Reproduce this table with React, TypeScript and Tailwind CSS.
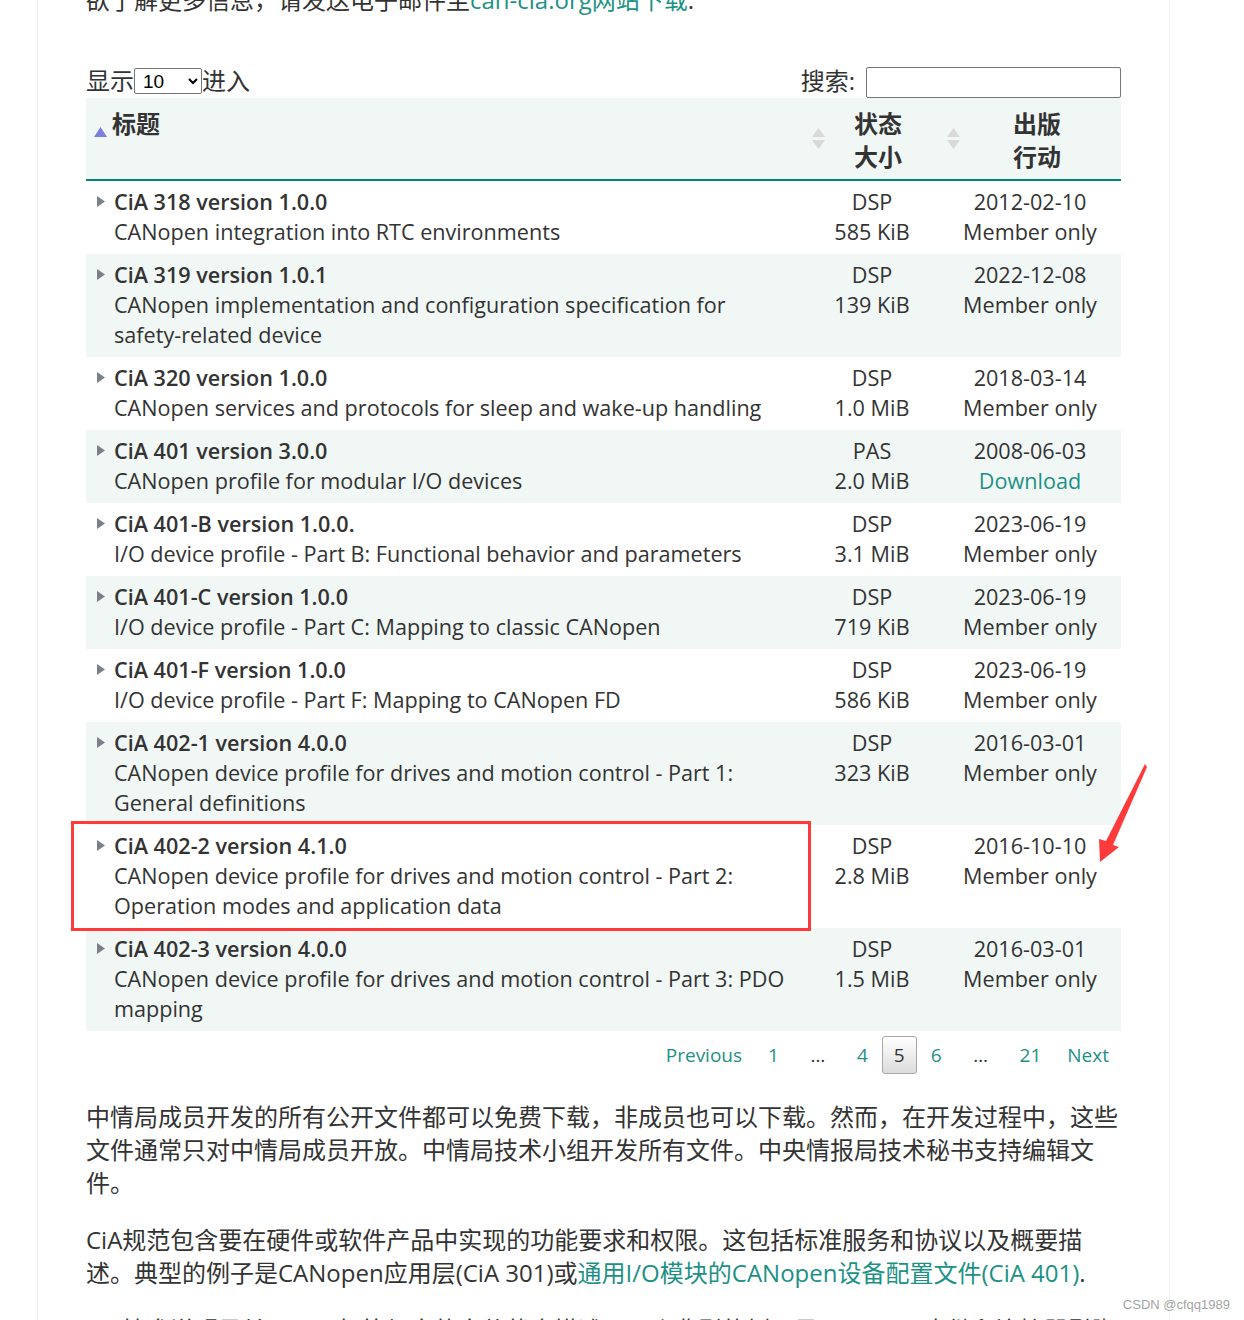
import React from "react";

type Spec = {
  title: string;
  desc: string;
  status: string;
  size: string;
  date: string;
  download?: boolean;
};

const specs: Spec[] = [
  { title: "CiA 318 version 1.0.0", desc: "CANopen integration into RTC environments", status: "DSP", size: "585 KiB", date: "2012-02-10" },
  { title: "CiA 319 version 1.0.1", desc: "CANopen implementation and configuration specification for safety-related device", status: "DSP", size: "139 KiB", date: "2022-12-08" },
  { title: "CiA 320 version 1.0.0", desc: "CANopen services and protocols for sleep and wake-up handling", status: "DSP", size: "1.0 MiB", date: "2018-03-14" },
  { title: "CiA 401 version 3.0.0", desc: "CANopen profile for modular I/O devices", status: "PAS", size: "2.0 MiB", date: "2008-06-03", download: true },
  { title: "CiA 401-B version 1.0.0.", desc: "I/O device profile - Part B: Functional behavior and parameters", status: "DSP", size: "3.1 MiB", date: "2023-06-19" },
  { title: "CiA 401-C version 1.0.0", desc: "I/O device profile - Part C: Mapping to classic CANopen", status: "DSP", size: "719 KiB", date: "2023-06-19" },
  { title: "CiA 401-F version 1.0.0", desc: "I/O device profile - Part F: Mapping to CANopen FD", status: "DSP", size: "586 KiB", date: "2023-06-19" },
  { title: "CiA 402-1 version 4.0.0", desc: "CANopen device profile for drives and motion control - Part 1: General definitions", status: "DSP", size: "323 KiB", date: "2016-03-01" },
  { title: "CiA 402-2 version 4.1.0", desc: "CANopen device profile for drives and motion control - Part 2: Operation modes and application data", status: "DSP", size: "2.8 MiB", date: "2016-10-10" },
  { title: "CiA 402-3 version 4.0.0", desc: "CANopen device profile for drives and motion control - Part 3: PDO mapping", status: "DSP", size: "1.5 MiB", date: "2016-03-01" },
];

function SortBoth() {
  return (
    <svg width="13" height="21" viewBox="0 0 13 21" className="absolute left-0 top-[30px]">
      <polygon points="6.5,0 13,9 0,9" fill="#d9d9d9" />
      <polygon points="0,12 13,12 6.5,21" fill="#d9d9d9" />
    </svg>
  );
}

function RowArrow() {
  return (
    <svg width="8" height="11" viewBox="0 0 8 11" className="mt-[9px]">
      <polygon points="0,0 8,5.5 0,11" fill="#7b818b" />
    </svg>
  );
}

function PageBtn({ label, active }: { label: string; active?: boolean }) {
  if (active) {
    return (
      <span className="ml-[2px] h-[38px] px-[11px] flex items-center border border-[#a8a8a8] rounded-[3px] bg-gradient-to-b from-white to-[#dcdcdc] text-[#333]">
        {label}
      </span>
    );
  }
  return <span className="ml-[2px] h-[38px] px-[12px] flex items-center text-[#1d9185]">{label}</span>;
}

export default function App() {
  return (
    <div className="relative min-h-[1320px] overflow-hidden bg-white font-['Open_Sans','Noto_Sans_CJK_SC',sans-serif] text-[#333]">
      <div className="ml-[37px] w-[1133px] min-h-[1340px] border-x border-[#eef2f2] px-12 flow-root">
        <p className="-mt-[17px] text-[24px] leading-[33px]">
          欲了解更多信息，请发送电子邮件至<span className="text-[#1d9185]">can-cia.org网站下载</span>.
        </p>

        <div className="mt-[48px] h-[34px] flex items-center justify-between text-[24px]">
          <div className="flex items-center">
            <span>显示</span>
            <select
              defaultValue="10"
              className="w-[68px] h-[26px] border border-[#767676] rounded-[2px] bg-white pl-[4px] text-[19px] text-black font-['Liberation_Sans',sans-serif]"
            >
              <option value="10">10</option>
              <option value="25">25</option>
              <option value="50">50</option>
            </select>
            <span>进入</span>
          </div>
          <div className="flex items-center">
            <span className="mr-[11px]">搜索:</span>
            <input className="mt-[3px] w-[255px] h-[31px] border border-[#767676] rounded-[2px] bg-white" />
          </div>
        </div>

        <table className="w-[1035px] table-fixed border-collapse">
          <colgroup>
            <col className="w-[726px]" />
            <col className="w-[135px]" />
            <col className="w-[174px]" />
          </colgroup>
          <thead>
            <tr className="bg-[#f0f7f5] border-b-2 border-[#00876f] text-[24px] leading-[33px] font-bold">
              <th className="relative h-[82px] align-top text-left pl-[26px] pt-[9px]">
                <svg width="13" height="10" viewBox="0 0 13 10" className="absolute left-[8px] top-[29px]">
                  <polygon points="6.5,0 13,10 0,10" fill="#7b7fe0" />
                </svg>
                标题
              </th>
              <th className="relative align-top text-center pl-0 pr-[3px] pt-[9px]">
                <SortBoth />
                状态
                <br />
                大小
              </th>
              <th className="relative align-top text-center pl-[6px] pt-[9px]">
                <SortBoth />
                出版
                <br />
                行动
              </th>
            </tr>
          </thead>
          <tbody className="text-[21.6px] leading-[30px]">
            {specs.map((s, i) => (
              <tr key={s.title} className={i % 2 === 1 ? "bg-[#f0f7f5]" : "bg-white"}>
                <td className="align-top pt-[6px] pb-[7px] pl-[11px] pr-[22px]">
                  <div className="flex">
                    <div className="w-[17px] shrink-0">
                      <RowArrow />
                    </div>
                    <div>
                      <div className="font-semibold">{s.title}</div>
                      <div>{s.desc}</div>
                    </div>
                  </div>
                </td>
                <td className="align-top pt-[6px] pb-[7px] text-center pr-[15px]">
                  <div>{s.status}</div>
                  <div>{s.size}</div>
                </td>
                <td className="align-top pt-[6px] pb-[7px] text-center pr-[8px]">
                  <div>{s.date}</div>
                  {s.download ? <div className="text-[#1d9185]">Download</div> : <div>Member only</div>}
                </td>
              </tr>
            ))}
          </tbody>
        </table>

        <div className="mt-[5px] flex justify-end text-[19px]">
          <PageBtn label="Previous" />
          <PageBtn label="1" />
          <span className="ml-[2px] w-[50px] h-[38px] flex items-center justify-center">…</span>
          <PageBtn label="4" />
          <PageBtn label="5" active />
          <PageBtn label="6" />
          <span className="ml-[2px] w-[50px] h-[38px] flex items-center justify-center">…</span>
          <PageBtn label="21" />
          <PageBtn label="Next" />
        </div>

        <div className="text-[24px] leading-[33px]">
          <p className="mt-[26px]">
            中情局成员开发的所有公开文件都可以免费下载，非成员也可以下载。然而，在开发过程中，这些文件通常只对中情局成员开放。中情局技术小组开发所有文件。中央情报局技术秘书支持编辑文件。
          </p>
          <p className="mt-[24px]">
            CiA规范包含要在硬件或软件产品中实现的功能要求和权限。这包括标准服务和协议以及概要描述。典型的例子是CANopen应用层(CiA 301)或
            <span className="text-[#1d9185]">通用I/O模块的CANopen设备配置文件(CiA 401)</span>.
          </p>
          <p className="mt-[24px] pl-[36px]">
            技术说明是关于下面标签规定的文件状态描述，一个典型的例子是CANopen中继和连接器引脚分配。
          </p>
        </div>
      </div>

      <div className="absolute left-[71px] top-[821px] w-[740px] h-[110px] border-[3px] border-[#ff3a3a]" />

      <svg width="1244" height="1320" className="absolute left-0 top-0 pointer-events-none">
        <polygon points="1145,764 1147,767 1113,845 1119,847 1100,862 1099,839 1106,841" fill="#ff3a3a" />
      </svg>

      <div className="absolute right-[14px] top-[1295px] text-[13px] text-[#a3a3a3] font-['Liberation_Sans',sans-serif]">
        CSDN @cfqq1989
      </div>
    </div>
  );
}
